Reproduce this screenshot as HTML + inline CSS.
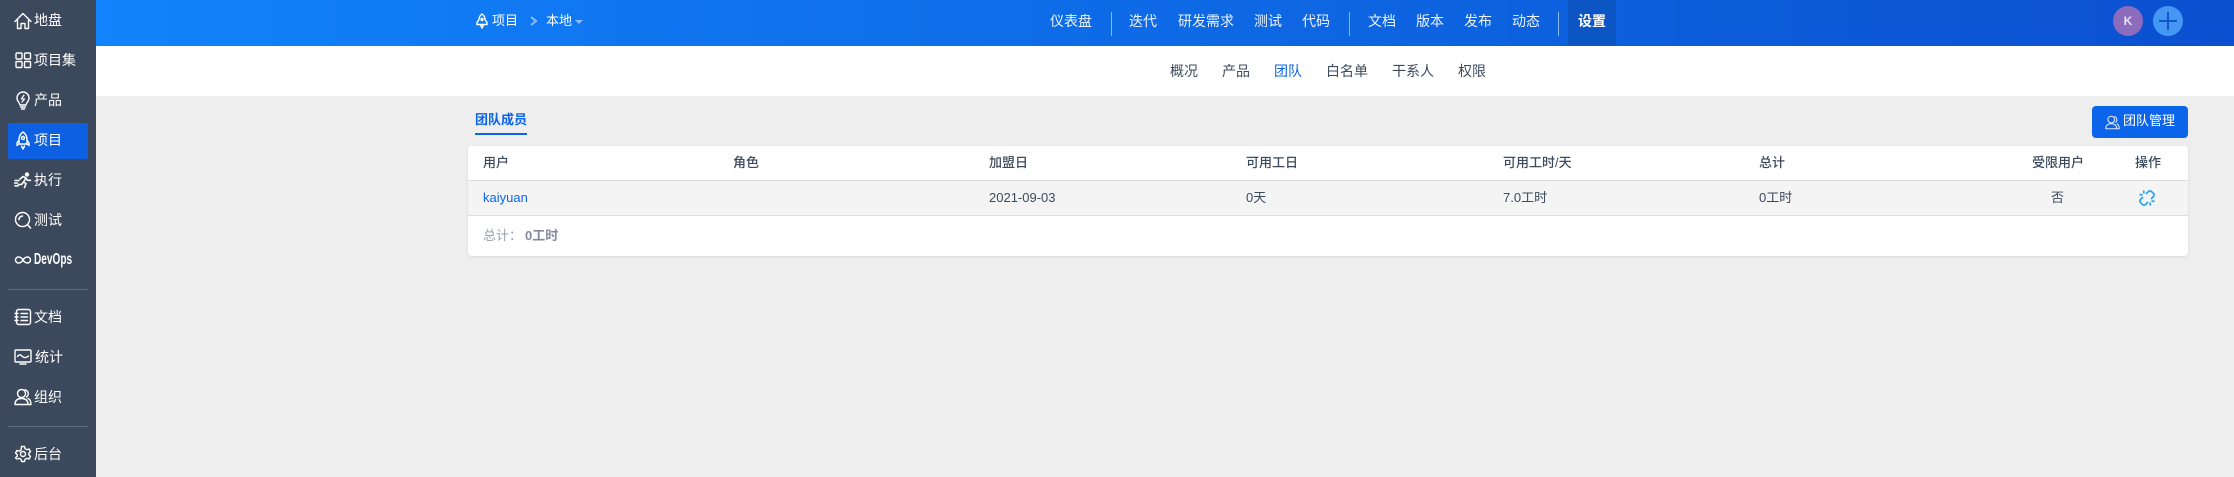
<!DOCTYPE html>
<html lang="zh"><head><meta charset="utf-8"><title>团队</title>
<style>
html,body{margin:0;padding:0;width:2234px;height:477px;overflow:hidden;background:#eee}
body{position:relative;font-family:"Liberation Sans","Noto Sans CJK SC",sans-serif;font-size:13px;color:#3c4a5d}
.a{position:absolute;white-space:nowrap;line-height:20px}
#side{position:absolute;left:0;top:0;width:96px;height:477px;background:#3c495c}
#side .a{color:#fff;font-size:14px;left:34px}
#side svg{position:absolute;left:14px;width:18px;height:18px;fill:none;stroke:#fff;stroke-width:1.4;stroke-linejoin:round;stroke-linecap:round}
.hr{position:absolute;left:8px;width:80px;height:1px;background:#626e7d}
#top{position:absolute;left:96px;top:0;width:2138px;height:46px;background:linear-gradient(90deg,#1183fb 0%,#0b50d0 100%)}
.t{position:absolute;white-space:nowrap;line-height:20px;top:11px;color:#fff;font-size:14px;opacity:.92}
.d{position:absolute;top:12px;width:1px;height:24px;background:#8db8ef}
.s{position:absolute;white-space:nowrap;line-height:20px;top:61px;font-size:14px;color:#3c4a5d}
.th{position:absolute;white-space:nowrap;line-height:20px;top:153px;font-size:13px;color:#3c4a5d;font-weight:500}
.td{position:absolute;white-space:nowrap;line-height:20px;top:188px;font-size:13px;color:#3c4a5d}
</style></head><body>
<div id="side">
<div style="position:absolute;left:8px;top:123px;width:80px;height:36px;background:#0c60e1;border-radius:2px"></div>
<svg viewBox="0 0 18 18" style="top:12px"><path d="M1 9.500 9 1.500l8 8M3.500 8v8.500h3.500v-5h4v5h3.500V8"/></svg><div class="a" style="top:10px">地盘</div>
<svg viewBox="0 0 18 18" style="top:51px"><rect x="2" y="2" width="6" height="6" rx="1"/><rect x="10.500" y="2" width="6" height="6" rx="1"/><rect x="2" y="10.500" width="6" height="6" rx="1"/><rect x="10.500" y="10.500" width="6" height="6" rx="1"/></svg><div class="a" style="top:50px">项目集</div>
<svg viewBox="0 0 18 20" style="top:91px;height:20px"><path d="M6 14c0-2-3-3.500-3-7a6 6 0 0 1 12 0c0 3.500-3 5-3 7zM6.500 16h5M7.500 18h3"/><path d="M10 4 7.500 8h3L8 11" stroke-width="1.200"/></svg><div class="a" style="top:90px">产品</div>
<svg viewBox="0 0 18 19" style="top:131px;height:19px"><path d="M9 1c3 2 4 5 4 8v4H5V9c0-3 1-6 4-8zM5 9l-2 3v2.500l2-1.500M13 9l2 3v2.500l-2-1.500M7.500 15 9 18 10.500 15"/><circle cx="9" cy="7" r="1.500"/></svg><div class="a" style="top:130px">项目</div>
<svg viewBox="0 0 18 18" style="top:171px"><circle cx="13" cy="3.500" r="1.500" fill="#fff"/><path d="M6 8l3-2.500 3 1.500-2.500 4 2.500 1.500-1.500 4M12 7.500l1.500 1.800 3 0M9.500 11 7.500 13.500 4.500 13.500M1 9.500h4M0.500 12h3M1 14.800h3" stroke-width="1.600"/></svg><div class="a" style="top:170px">执行</div>
<svg viewBox="0 0 18 18" style="top:211px"><circle cx="8.500" cy="8.500" r="7"/><path d="M13.500 13.500 16.500 17M5 8.500A3.500 3.500 0 0 1 8.500 5" stroke-width="1.600"/></svg><div class="a" style="top:210px">测试</div>
<svg viewBox="0 0 18 18" style="top:251px"><path d="M9 9C7.500 6.500 6 6 4.500 6a3 3 0 0 0 0 6C6 12 7.500 11.500 9 9c1.500-2.500 3-3 4.500-3a3 3 0 0 1 0 6C12 12 10.500 11.500 9 9z"/></svg><div class="a" style="top:250px;left:34px;font-weight:700;font-size:16px;transform-origin:left;transform:scaleX(.63)">DevOps</div>
<div class="hr" style="top:289px"></div>
<svg viewBox="0 0 18 18" style="top:308px"><rect x="2.500" y="1.500" width="14" height="15" rx="2"/><path d="M7 5.500h6.500M7 9h6.500M7 12.500h6.500M1 5.500h3M1 9h3M1 12.500h3"/></svg><div class="a" style="top:307px">文档</div>
<svg viewBox="0 0 18 18" style="top:348px"><rect x="1" y="2" width="16" height="12" rx="1"/><path d="M3.500 8.500c2-3 3.500-1.500 5 0s3.500 1.500 6-.5M6 16h6"/></svg><div class="a" style="top:347px;left:35px">统计</div>
<svg viewBox="0 0 18 18" style="top:388px"><circle cx="7.500" cy="5.500" r="4"/><path d="M1 16.500c0-4 2-6 6.500-6s6.500 2 6.500 6zM11 1.800a4 4 0 0 1 1.500 7.200M14 10.500c2 .8 3 2.500 3 6h-3"/></svg><div class="a" style="top:387px">组织</div>
<div class="hr" style="top:426px"></div>
<svg viewBox="0 0 18 18" style="top:445px"><circle cx="9" cy="9" r="2.500"/><path d="M7.500 1.500h3l.5 2.200 1.800 1 2.200-.7 1.500 2.600-1.700 1.600v1.600l1.700 1.600-1.500 2.600-2.200-.7-1.800 1-.5 2.200h-3l-.5-2.200-1.800-1-2.200.7L1.500 12.800l1.700-1.600V9.600L1.500 8l1.500-2.600 2.200.7 1.800-1z"/></svg><div class="a" style="top:444px">后台</div>
</div>

<div id="top"></div>
<svg style="position:absolute;left:476px;top:13px;width:12px;height:16px;fill:none;stroke:#fff;stroke-width:1.400" viewBox="0 0 12 16"><path d="M6 1c2 1.500 3 3.500 3 5.500l2 3v2H1v-2l2-3C3 4.500 4 2.500 6 1zM4.500 12 6 15l1.500-3"/><circle cx="6" cy="6.500" r="1"/></svg>
<div class="t" style="left:492px;font-size:13px;opacity:1;top:11px">项目</div>
<svg style="position:absolute;left:529px;top:15px;width:10px;height:12px;fill:none;stroke:#8fbdf5;stroke-width:2" viewBox="0 0 10 12"><path d="M2 2l5 4-5 4"/></svg>
<div class="t" style="left:546px;font-size:13px;opacity:1;top:11px">本地</div>
<div style="position:absolute;left:575px;top:20px;width:0;height:0;border-left:4px solid transparent;border-right:4px solid transparent;border-top:4px solid #8fbdf5"></div>

<div class="t" style="left:1050px">仪表盘</div><div class="d" style="left:1111px"></div>
<div class="t" style="left:1129px">迭代</div>
<div class="t" style="left:1178px">研发需求</div>
<div class="t" style="left:1254px">测试</div>
<div class="t" style="left:1302px">代码</div><div class="d" style="left:1349px"></div>
<div class="t" style="left:1368px">文档</div>
<div class="t" style="left:1416px">版本</div>
<div class="t" style="left:1464px">发布</div>
<div class="t" style="left:1512px">动态</div><div class="d" style="left:1558px"></div>
<div style="position:absolute;left:1568px;top:0;width:48px;height:46px;background:#0c55c4"></div>
<div class="t" style="left:1578px;font-weight:700;opacity:1">设置</div>

<div style="position:absolute;left:2113px;top:6px;width:30px;height:30px;border-radius:50%;background:#8d6bbd;color:#e8e2f2;font-weight:700;font-size:12px;line-height:30px;text-align:center">K</div>
<div style="position:absolute;left:2153px;top:6px;width:30px;height:30px;border-radius:50%;background:#4597f5"></div>
<div style="position:absolute;left:2159px;top:20px;width:18px;height:2px;background:#1557c8"></div>
<div style="position:absolute;left:2167px;top:12px;width:2px;height:18px;background:#1557c8"></div>

<div style="position:absolute;left:96px;top:46px;width:2138px;height:50px;background:#fff"></div>
<div class="s" style="left:1170px">概况</div>
<div class="s" style="left:1222px">产品</div>
<div class="s" style="left:1274px;color:#0c64eb">团队</div>
<div class="s" style="left:1326px">白名单</div>
<div class="s" style="left:1392px">干系人</div>
<div class="s" style="left:1458px">权限</div>

<div class="a" style="left:475px;top:110px;color:#0c64eb;font-size:13px;font-weight:700">团队成员</div>
<div style="position:absolute;left:475px;top:133px;width:52px;height:2px;background:#0c64eb"></div>

<div style="position:absolute;left:2092px;top:106px;width:96px;height:32px;background:#0c64eb;border-radius:4px"></div>
<svg style="position:absolute;left:2105px;top:115px;width:15px;height:15px;fill:none;stroke:#dce8fb;stroke-width:1.300" viewBox="0 0 18 18"><circle cx="7.500" cy="5.500" r="4"/><path d="M1 16.500c0-4 2-6 6.500-6s6.500 2 6.500 6zM11 1.800a4 4 0 0 1 1.500 7.200M14 10.500c2 .8 3 2.500 3 6h-3"/></svg>
<div class="a" style="left:2123px;top:111px;color:#fff;font-size:13px">团队管理</div>

<div style="position:absolute;left:468px;top:146px;width:1720px;height:110px;background:#fff;border-radius:4px;box-shadow:0 1px 3px rgba(0,0,0,.08)"></div>
<div style="position:absolute;left:468px;top:180px;width:1720px;height:36px;background:#f4f4f4;border-top:1px solid #ddd;border-bottom:1px solid #ddd;box-sizing:border-box"></div>

<div class="th" style="left:483px">用户</div>
<div class="th" style="left:733px">角色</div>
<div class="th" style="left:989px">加盟日</div>
<div class="th" style="left:1246px">可用工日</div>
<div class="th" style="left:1503px">可用工时/天</div>
<div class="th" style="left:1759px">总计</div>
<div class="th" style="left:2032px">受限用户</div>
<div class="th" style="left:2135px">操作</div>

<div class="td" style="left:483px;color:#0c64eb">kaiyuan</div>
<div class="td" style="left:989px">2021-09-03</div>
<div class="td" style="left:1246px">0天</div>
<div class="td" style="left:1503px">7.0工时</div>
<div class="td" style="left:1759px">0工时</div>
<div class="td" style="left:2051px">否</div>
<svg style="position:absolute;left:2138px;top:189px;width:18px;height:18px;fill:none;stroke:#2ba3f3;stroke-width:1.700" viewBox="0 0 18 18"><path d="M8 5 10.500 2.500a2.200 2.200 0 0 1 3 0l2 2a2.200 2.200 0 0 1 0 3L13 10M10 13 7.500 15.500a2.200 2.200 0 0 1-3 0l-2-2a2.200 2.200 0 0 1 0-3L5 8"/><path d="M5.500 1.500l.5 3M1.500 5.500l3 .5M12.500 16.500l-.5-3M16.500 12.500l-3-.5"/></svg>

<div class="a" style="left:483px;top:226px;color:#9aa1ad;font-size:13px">总计：</div>
<div class="a" style="left:525px;top:226px;color:#838a9d;font-size:13px;font-weight:700">0工时</div>
</body></html>
